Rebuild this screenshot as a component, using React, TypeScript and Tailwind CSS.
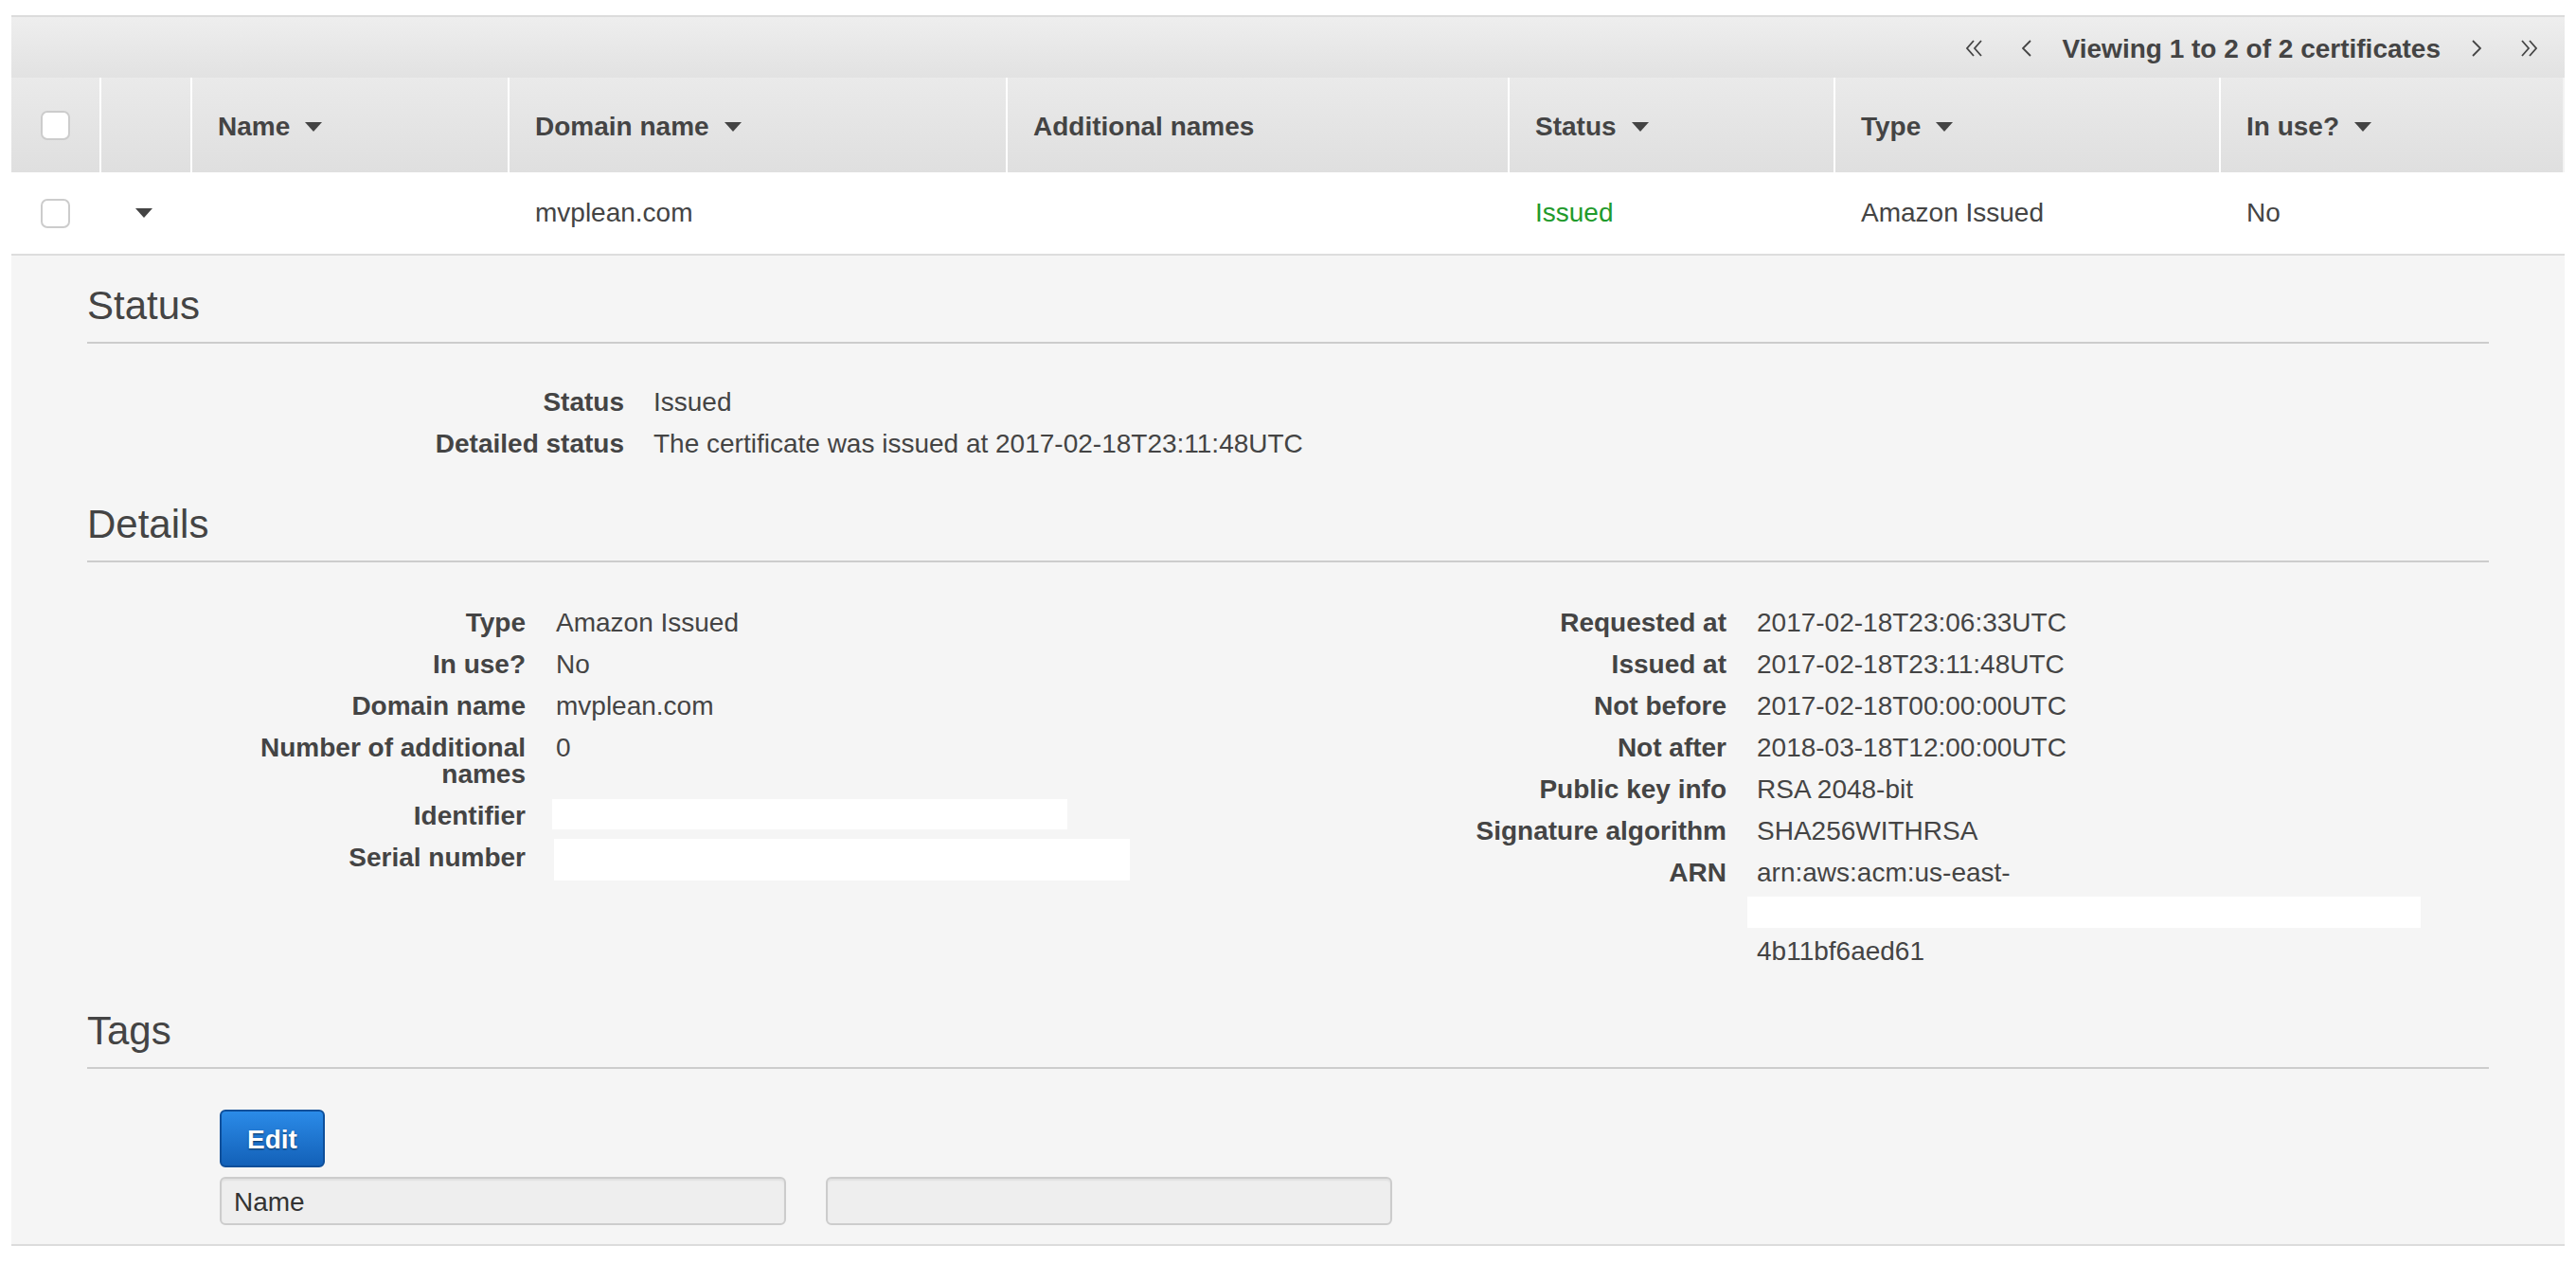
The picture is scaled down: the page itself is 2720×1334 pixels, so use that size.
import React from "react";

const Caret = () => (
  <svg width="18" height="10" viewBox="0 0 18 10" className="shrink-0">
    <polygon points="0,0 18,0 9,10" fill="#444444" />
  </svg>
);

const Checkbox = () => (
  <div className="w-[31px] h-[31px] rounded-[7px] border-2 border-[#cccccc] bg-white" />
);

const Single = ({ left }: { left?: boolean }) => (
  <svg width="10" height="18" viewBox="0 0 10 18" className="shrink-0">
    <polyline
      points={left ? "9,1 1,9 9,17" : "1,1 9,9 1,17"}
      fill="none"
      stroke="#444444"
      strokeWidth="1.8"
    />
  </svg>
);

const Double = ({ left }: { left?: boolean }) => (
  <svg width="17" height="18" viewBox="0 0 17 18" className="shrink-0">
    {left ? (
      <>
        <polyline points="8,1 1,9 8,17" fill="none" stroke="#444444" strokeWidth="1.8" />
        <polyline points="16,1 9,9 16,17" fill="none" stroke="#444444" strokeWidth="1.8" />
      </>
    ) : (
      <>
        <polyline points="1,1 8,9 1,17" fill="none" stroke="#444444" strokeWidth="1.8" />
        <polyline points="9,1 16,9 9,17" fill="none" stroke="#444444" strokeWidth="1.8" />
      </>
    )}
  </svg>
);

const Heading = ({ children, className = "" }: { children: React.ReactNode; className?: string }) => (
  <div className={`text-[42px] leading-[50px] pb-[13px] border-b-2 border-[#cccccc] text-[#444444] ${className}`}>
    {children}
  </div>
);

const Row = ({ label, children }: { label: React.ReactNode; children: React.ReactNode }) => (
  <div className="flex leading-[28px]">
    <div className="w-[463px] shrink-0 pl-[130px] text-right font-bold">{label}</div>
    <div className="ml-[32px] flex-1">{children}</div>
  </div>
);

export default function App() {
  return (
    <div className="min-h-[1334px] bg-white pt-[16px] px-[12px] font-['Liberation_Sans',Arial,sans-serif] text-[28px] text-[#444444]">
      {/* pagination bar */}
      <div className="h-[66px] border-t-2 border-[#dcdcdc] bg-linear-to-b from-[#eeeeee] to-[#e2e2e2] flex items-center justify-end pr-[29px] pt-[2px]">
        <Double left />
        <div className="ml-[42px] flex"><Single left /></div>
        <div className="ml-[33px] font-bold leading-[28px] pt-[2px]">Viewing 1 to 2 of 2 certificates</div>
        <div className="ml-[33px] flex"><Single /></div>
        <div className="ml-[42px] flex"><Double /></div>
      </div>

      {/* header row */}
      <div className="grid grid-cols-[93px_96px_335px_526px_530px_344px_407px_1fr] h-[100px] bg-linear-to-b from-[#eaeaea] to-[#dfdfdf] font-bold">
        <div className="flex items-center justify-center"><Checkbox /></div>
        <div className="border-l-2 border-white" />
        <div className="border-l-2 border-white pl-[27px] pt-[3px] flex items-center gap-[16px]">Name <Caret /></div>
        <div className="border-l-2 border-white pl-[27px] pt-[3px] flex items-center gap-[16px]">Domain name <Caret /></div>
        <div className="border-l-2 border-white pl-[27px] pt-[3px] flex items-center">Additional names</div>
        <div className="border-l-2 border-white pl-[27px] pt-[3px] flex items-center gap-[16px]">Status <Caret /></div>
        <div className="border-l-2 border-white pl-[27px] pt-[3px] flex items-center gap-[16px]">Type <Caret /></div>
        <div className="border-l-2 border-r-2 border-l-white border-r-[#f3f3f3] pl-[27px] pt-[3px] flex items-center gap-[16px]">In use? <Caret /></div>
      </div>

      {/* data row */}
      <div className="grid grid-cols-[93px_96px_335px_526px_530px_344px_407px_1fr] h-[88px] bg-white border-b-2 border-[#dddddd]">
        <div className="flex items-center justify-center"><Checkbox /></div>
        <div className="flex items-center justify-center pr-[2px]"><Caret /></div>
        <div />
        <div className="pl-[29px] flex items-center">mvplean.com</div>
        <div />
        <div className="pl-[29px] flex items-center text-[#1f9a2c]">Issued</div>
        <div className="pl-[29px] flex items-center">Amazon Issued</div>
        <div className="pl-[29px] flex items-center">No</div>
      </div>

      {/* expanded panel */}
      <div className="bg-[#f5f5f5] border-b-2 border-[#dcdcdc] px-[80px] pt-[28px] pb-[20px]">
        <Heading>Status</Heading>
        <div className="mt-[48px] flex flex-col gap-[16px]">
          <div className="flex leading-[28px]">
            <div className="w-[567px] shrink-0 text-right font-bold">Status</div>
            <div className="ml-[31px]">Issued</div>
          </div>
          <div className="flex leading-[28px]">
            <div className="w-[567px] shrink-0 text-right font-bold">Detailed status</div>
            <div className="ml-[31px]">The certificate was issued at 2017-02-18T23:11:48UTC</div>
          </div>
        </div>

        <Heading className="mt-[46px]">Details</Heading>
        <div className="mt-[50px] grid grid-cols-2 items-start">
          <div className="flex flex-col gap-[16px]">
            <Row label="Type">Amazon Issued</Row>
            <Row label="In use?">No</Row>
            <Row label="Domain name">mvplean.com</Row>
            <Row label="Number of additional names">0</Row>
            <Row label="Identifier">
              <div className="mt-[-4px] ml-[-4px] w-[544px] h-[32px] bg-white" />
            </Row>
            <Row label="Serial number">
              <div className="mt-[-6px] ml-[-2px] w-[608px] h-[44px] bg-white" />
            </Row>
          </div>
          <div className="flex flex-col gap-[16px]">
            <Row label="Requested at">2017-02-18T23:06:33UTC</Row>
            <Row label="Issued at">2017-02-18T23:11:48UTC</Row>
            <Row label="Not before">2017-02-18T00:00:00UTC</Row>
            <Row label="Not after">2018-03-18T12:00:00UTC</Row>
            <Row label="Public key info">RSA 2048-bit</Row>
            <Row label="Signature algorithm">SHA256WITHRSA</Row>
            <Row label="ARN">
              <div>arn:aws:acm:us-east-</div>
              <div className="mt-[11px] ml-[-10px] w-[711px] h-[33px] bg-white" />
              <div className="mt-[11px]">4b11bf6aed61</div>
            </Row>
          </div>
        </div>

        <Heading className="mt-[45px]">Tags</Heading>
        <div className="mt-[43px] pl-[140px]">
          <button className="w-[111px] h-[61px] rounded-[6px] border-2 border-[#0e4f9a] bg-linear-to-b from-[#2b8be8] to-[#1361b8] text-white font-bold text-[28px] leading-[28px] pt-[2px] [text-shadow:0_1px_2px_rgba(0,0,0,0.55)]">
            Edit
          </button>
          <div className="mt-[10px] flex gap-[42px]">
            <div className="w-[598px] h-[51px] rounded-[6px] border-2 border-[#cccccc] bg-[#eeeeee] shadow-[inset_0_2px_2px_rgba(0,0,0,0.06)] pl-[13px] pt-[3px] flex items-center text-[#333333]">
              Name
            </div>
            <div className="w-[598px] h-[51px] rounded-[6px] border-2 border-[#cccccc] bg-[#eeeeee] shadow-[inset_0_2px_2px_rgba(0,0,0,0.06)]" />
          </div>
        </div>
      </div>
    </div>
  );
}
